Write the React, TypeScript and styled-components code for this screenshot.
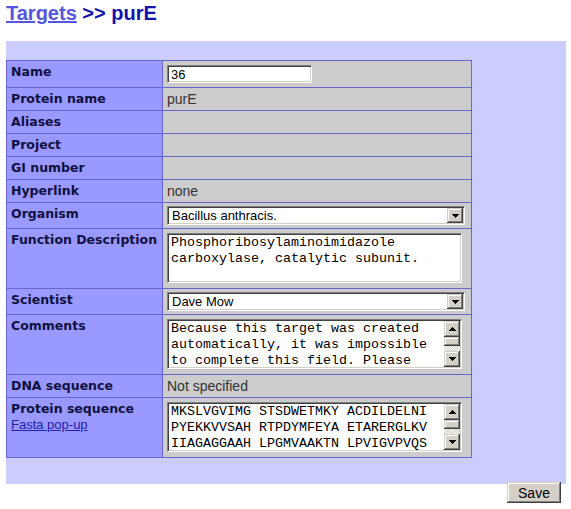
import React from "react";
import styled, { createGlobalStyle } from "styled-components";

const GlobalStyle = createGlobalStyle`
  html, body { margin: 0; padding: 0; background: #ffffff; }
  body { font-family: "Liberation Sans", Arial, sans-serif; }
`;

const Page = styled.div`
  width: 571px;
  box-sizing: border-box;
  padding: 0 5px 0 6px;
`;

const Heading = styled.h1`
  margin: 0;
  padding-top: 2px;
  height: 41px;
  box-sizing: border-box;
  font: bold 20px/23px "Liberation Sans", Arial, sans-serif;
  color: #1414aa;
`;

const Crumb = styled.a`
  color: #5555dd;
  text-decoration: underline;
`;

const Panel = styled.div`
  background: #ccccff;
  padding: 19px 0 26px 0;
`;

const Table = styled.table`
  border-collapse: collapse;
  width: 466px;
`;

const LabelCell = styled.th`
  width: 147px;
  background: #9999ff;
  border: 1px solid #6666cc;
  text-align: left;
  vertical-align: top;
  white-space: nowrap;
  padding: 3px 4px;
  font: bold 12.5px/16px "DejaVu Sans", Verdana, sans-serif;
  color: #101040;
`;

const ValueCell = styled.td`
  background: #cccccc;
  border: 1px solid #6666cc;
  vertical-align: top;
  padding: 3px 4px;
  font: 14px/16px "Liberation Sans", Arial, sans-serif;
  color: #333333;
`;

const FastaLink = styled.a`
  display: block;
  font: 13px/15px "Liberation Sans", Arial, sans-serif;
  font-weight: normal;
  color: #2222aa;
  text-decoration: underline;
`;

const sunken = `
  border: 1px solid;
  border-color: #808080 #ffffff #ffffff #808080;
  box-shadow: inset 1px 1px #404040, inset -1px -1px #d4d0c8;
  background: #ffffff;
  box-sizing: border-box;
`;

const raised = `
  background: #d4d0c8;
  box-shadow: inset -1px -1px #404040, inset 1px 1px #d4d0c8,
    inset -2px -2px #808080, inset 2px 2px #ffffff;
  box-sizing: border-box;
`;

const NameInput = styled.input`
  ${sunken}
  display: block;
  width: 145px;
  height: 18px;
  margin: 1px 0;
  padding: 1px 3px 0;
  font: 13px "Liberation Sans", Arial, sans-serif;
  color: #000000;
  outline: none;
`;

const SelectFrame = styled.div`
  ${sunken}
  display: flex;
  width: 298px;
  height: 19px;
  padding: 1px;
`;

const NativeSelect = styled.select`
  appearance: none;
  -webkit-appearance: none;
  flex: 1;
  min-width: 0;
  margin: 0;
  border: 0;
  outline: none;
  background: transparent;
  padding: 0 0 0 3px;
  font: 13px "Liberation Sans", Arial, sans-serif;
  color: #000000;
`;

const ArrowButton = styled.span`
  ${raised}
  flex: none;
  width: 16px;
  display: flex;
  align-items: center;
  justify-content: center;
`;

const FieldFrame = styled.div`
  ${sunken}
  display: flex;
  width: 295px;
  height: 50px;
  margin: 1px 0 2px;
  padding: 1px;
`;

const TextArea = styled.textarea`
  flex: 1;
  min-width: 0;
  margin: 0;
  border: 0;
  outline: none;
  resize: none;
  overflow: hidden;
  background: transparent;
  padding: 0 2px;
  font: 13.333px/16px "Liberation Mono", "Courier New", monospace;
  color: #000000;
`;

const ScrollBar = styled.div`
  flex: none;
  width: 16px;
  display: flex;
  flex-direction: column;
`;

const ScrollButton = styled.div`
  ${raised}
  flex: none;
  height: 16px;
  display: flex;
  align-items: center;
  justify-content: center;
`;

const ScrollThumb = styled.div`
  ${raised}
  flex: none;
  height: 9px;
`;

const ScrollTrack = styled.div`
  flex: 1;
  background: repeating-conic-gradient(#d4d0c8 0 25%, #ffffff 0 50%) 0 0 / 2px 2px;
`;

const Footer = styled.div`
  display: flex;
  justify-content: flex-end;
  padding-right: 5px;
  margin-top: -2px;
`;

const SaveButton = styled.button`
  ${raised}
  width: 54px;
  height: 21px;
  border: 0;
  padding: 0;
  font: 14px "Liberation Sans", Arial, sans-serif;
  color: #000000;
`;

const Arrow = ({ up }: { up?: boolean }) => (
  <svg width="7" height="4" viewBox="0 0 7 4" shapeRendering="crispEdges">
    <polygon points={up ? "3.5,0 7,4 0,4" : "0,0 7,0 3.5,4"} fill="#000000" />
  </svg>
);

const Select = ({ value }: { value: string }) => (
  <SelectFrame>
    <NativeSelect defaultValue={value}>
      <option>{value}</option>
    </NativeSelect>
    <ArrowButton>
      <Arrow />
    </ArrowButton>
  </SelectFrame>
);

const Field = ({ text, scroll }: { text: string; scroll?: boolean }) => (
  <FieldFrame>
    <TextArea defaultValue={text} spellCheck={false} />
    {scroll && (
      <ScrollBar>
        <ScrollButton>
          <Arrow up />
        </ScrollButton>
        <ScrollThumb />
        <ScrollTrack />
        <ScrollButton>
          <Arrow />
        </ScrollButton>
      </ScrollBar>
    )}
  </FieldFrame>
);

const COMMENTS =
  "Because this target was created automatically, it was impossible to complete this field. Please edit it when you know more.";
const SEQUENCE =
  "MKSLVGVIMG STSDWETMKY ACDILDELNI PYEKKVVSAH RTPDYMFEYA ETARERGLKV IIAGAGGAAH LPGMVAAKTN LPVIGVPVQS KALNGLDSLL SIVQMPGGVP VATVAIGKAG";

export default function App() {
  return (
    <>
      <GlobalStyle />
      <Page>
        <Heading>
          <Crumb href="#">Targets</Crumb> &gt;&gt; purE
        </Heading>
        <Panel>
          <Table>
            <tbody>
              <tr>
                <LabelCell>Name</LabelCell>
                <ValueCell>
                  <NameInput defaultValue="36" />
                </ValueCell>
              </tr>
              <tr>
                <LabelCell>Protein name</LabelCell>
                <ValueCell>purE</ValueCell>
              </tr>
              <tr>
                <LabelCell>Aliases</LabelCell>
                <ValueCell />
              </tr>
              <tr>
                <LabelCell>Project</LabelCell>
                <ValueCell />
              </tr>
              <tr>
                <LabelCell>GI number</LabelCell>
                <ValueCell />
              </tr>
              <tr>
                <LabelCell>Hyperlink</LabelCell>
                <ValueCell>none</ValueCell>
              </tr>
              <tr>
                <LabelCell>Organism</LabelCell>
                <ValueCell>
                  <Select value="Bacillus anthracis." />
                </ValueCell>
              </tr>
              <tr>
                <LabelCell>Function Description</LabelCell>
                <ValueCell>
                  <Field text="Phosphoribosylaminoimidazole carboxylase, catalytic subunit." />
                </ValueCell>
              </tr>
              <tr>
                <LabelCell>Scientist</LabelCell>
                <ValueCell>
                  <Select value="Dave Mow" />
                </ValueCell>
              </tr>
              <tr>
                <LabelCell>Comments</LabelCell>
                <ValueCell>
                  <Field text={COMMENTS} scroll />
                </ValueCell>
              </tr>
              <tr>
                <LabelCell>DNA sequence</LabelCell>
                <ValueCell>Not specified</ValueCell>
              </tr>
              <tr>
                <LabelCell>
                  Protein sequence
                  <FastaLink href="#">Fasta pop-up</FastaLink>
                </LabelCell>
                <ValueCell>
                  <Field text={SEQUENCE} scroll />
                </ValueCell>
              </tr>
            </tbody>
          </Table>
        </Panel>
        <Footer>
          <SaveButton>Save</SaveButton>
        </Footer>
      </Page>
    </>
  );
}
